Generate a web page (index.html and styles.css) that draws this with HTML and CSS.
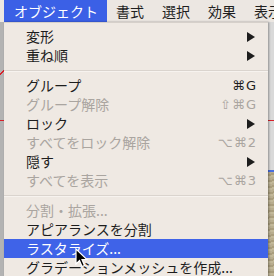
FILE: index.html
```html
<!DOCTYPE html>
<html lang="ja">
<head>
    <meta charset="UTF-8">
    <title>オブジェクト メニュー</title>
    <link rel="stylesheet" href="styles.css">
</head>
<body>

<div class="screen">
    <!-- app window behind the menu -->
    <div class="backdrop">
        <div class="bd-left"></div>
        <div class="bd-right">
            <div class="bd-panel"></div>
            <div class="bd-texture"></div>
        </div>
        <div class="bd-redline"></div>
        <div class="bd-mark"></div>
    </div>

    <div class="menubar">
        <span class="menubar-item active">オブジェクト</span>
        <span class="menubar-item">書式</span>
        <span class="menubar-item">選択</span>
        <span class="menubar-item">効果</span>
        <span class="menubar-item">表示</span>
    </div>

    <div class="dropdown">
        <div class="item"><span>変形</span><svg class="arrow" viewBox="0 0 8 10"><polygon points="0,0 8,5 0,10"/></svg></div>
        <div class="item"><span>重ね順</span><svg class="arrow" viewBox="0 0 8 10"><polygon points="0,0 8,5 0,10"/></svg></div>
        <div class="sep"></div>
        <div class="item"><span>グループ</span><span class="key">⌘G</span></div>
        <div class="item disabled"><span>グループ解除</span><span class="key">⇧⌘G</span></div>
        <div class="item"><span>ロック</span><svg class="arrow" viewBox="0 0 8 10"><polygon points="0,0 8,5 0,10"/></svg></div>
        <div class="item disabled"><span>すべてをロック解除</span><span class="key">⌥⌘2</span></div>
        <div class="item"><span>隠す</span><svg class="arrow" viewBox="0 0 8 10"><polygon points="0,0 8,5 0,10"/></svg></div>
        <div class="item disabled"><span>すべてを表示</span><span class="key">⌥⌘3</span></div>
        <div class="sep"></div>
        <div class="item disabled"><span>分割・拡張...</span></div>
        <div class="item"><span>アピアランスを分割</span></div>
        <div class="item selected"><span>ラスタライズ...</span></div>
        <div class="item"><span>グラデーションメッシュを作成...</span></div>
    </div>

    <svg class="cursor" viewBox="0 0 13 20">
        <path d="M1,1 L1,16 L4.5,12.5 L7,18.5 L9.5,17.5 L7,11.5 L12,11.5 Z"/>
    </svg>
</div>

</body>
</html>
```

FILE: styles.css
```css
body {
    margin: 0;
    font-family: "Noto Sans CJK JP", "DejaVu Sans", sans-serif;
    font-size: 14px;
}
.screen {
    position: relative;
    width: 274px;
    height: 276px;
    overflow: hidden;
    background: #ece7e2;
}

/* app content behind */
.backdrop {
    position: absolute;
    top: 22px;
    left: 0;
    right: 0;
    bottom: 0;
    display: flex;
    justify-content: space-between;
}
.bd-left {
    width: 5px;
    background: #b3b3b3;
    border-right: 1px solid #8f8f8f;
}
.bd-right {
    width: 6px;
    display: flex;
    flex-direction: column;
    border-left: 2px solid #7d7a74;
}
.bd-panel {
    height: 148px;
    background: #d9d9d9;
    border-bottom: 2px solid #4a6fe0;
}
.bd-texture {
    flex: 1;
    background: repeating-linear-gradient(170deg, #b8ad8f 0 2px, #a99d7d 2px 4px, #c2b899 4px 6px);
}
.bd-redline {
    position: absolute;
    top: 98px;
    left: 0;
    right: 0;
    height: 1px;
    background: #d8202a;
}
.bd-mark {
    position: absolute;
    top: 48px;
    left: 0;
    width: 4px;
    height: 6px;
    background: linear-gradient(135deg, transparent 40%, #d8202a 40% 60%, transparent 60%);
}

/* menu bar */
.menubar {
    position: relative;
    height: 22px;
    display: flex;
    align-items: center;
    padding-left: 4px;
    background: #ece7e2;
    white-space: nowrap;
}
.menubar-item {
    height: 22px;
    line-height: 22px;
    padding: 0 9px;
    color: #1f1f1f;
}
.menubar-item.active {
    background: #3b60e6;
    color: #fff;
    padding: 0 9px 0 10px;
}

/* dropdown */
.dropdown {
    position: absolute;
    top: 22px;
    left: 4px;
    width: 264px;
    padding-top: 4px;
    background: #efe9e3;
    border-top: 1px solid #d6d0ca;
    box-shadow: 1px 0 2px rgba(0, 0, 0, 0.35);
    box-sizing: border-box;
    height: 260px;
}
.item {
    height: 19px;
    display: flex;
    align-items: center;
    justify-content: space-between;
    padding: 0 11px 0 22px;
    color: #1d1d1d;
    white-space: nowrap;
    line-height: 19px;
}
.item.disabled {
    color: #aaa5a0;
}
.item.selected {
    background: #3f63e8;
    color: #fff;
}
.key {
    font-family: "DejaVu Sans", sans-serif;
    font-size: 13px;
    letter-spacing: 1px;
}
.arrow {
    width: 8px;
    height: 10px;
    margin-right: 2px;
    fill: #1d1d1d;
}
.sep {
    height: 1px;
    margin: 5px 0 4px;
    background: #dad4ce;
    border-bottom: 1px solid #f7f3ef;
}
.cursor {
    position: absolute;
    left: 75px;
    top: 248px;
    width: 13px;
    height: 20px;
    fill: #000;
    stroke: #fff;
    stroke-width: 1.2;
}
```
